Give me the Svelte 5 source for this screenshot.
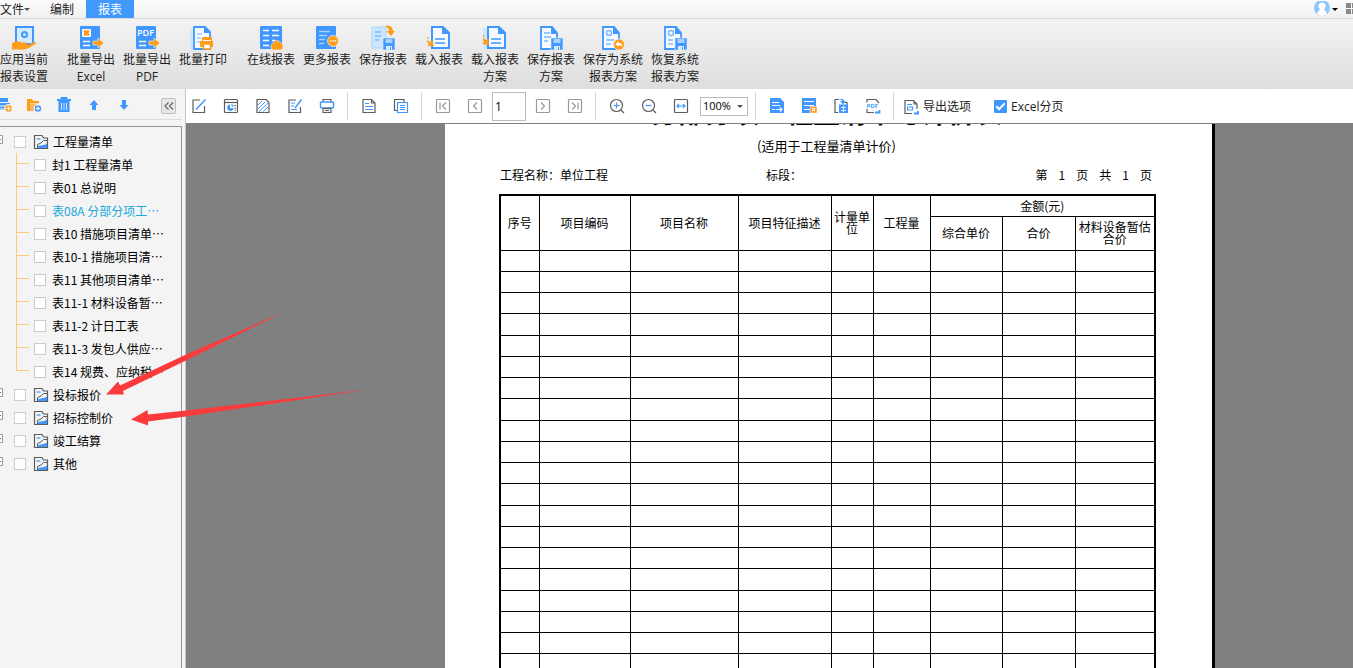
<script lang="ts">
  type Tool = { icon: string; label: string }
  type RibbonItem = { icon: string; lines: string[]; wide?: boolean }

  const blue = '#3f97ff'
  const orange = '#ff9c1a'
  const disk = `<path d="M12 12h12v12H12z" fill="${blue}" stroke="#eee" stroke-width=".6"/><path d="M14.500 13h7v4h-7z" fill="#a8d4ff"/><path d="M15 20h6v4h-6z" fill="#d8ecff"/><path d="M19 21h1v3h-1z" fill="${blue}"/>`
  const sheet = `<path d="M2 1h11l5 6v16H2z" fill="#f4faff" stroke="${blue}" stroke-width="1.800"/><path d="M12 0v8h7z" fill="${blue}"/>`
  const arrowOut = `<path d="M14 15h5v-3l6 5-6 5v-3h-5z" fill="${orange}" stroke="#eee" stroke-width=".6"/>`
  const boxed = (d: string) => `<rect x="1.500" y="1.500" width="13" height="13" rx="1"/><path d="${d}"/>`

  // 24 x 24 drawings for the ribbon
  const big: Record<string, string> = {
    apply: `<path d="M4 1h17v17H4z" fill="#d5eaff" stroke="${blue}" stroke-width="2"/><circle cx="12.500" cy="8.500" r="2.500" fill="none" stroke="${blue}" stroke-width="2"/><path d="M0 17l5-2 5 1.500h4c1.500 0 1.500 2 0 2.500l2 0 5-2.500c2-.6 4 0 3 1l-7 4.500-5 1.500H0z" fill="${orange}"/>`,
    excel: `<rect x="1" width="20" height="23" rx="1" fill="${blue}"/><rect x="3" y="3" width="9" height="8" rx="1" fill="#fff"/><path d="M5 4.500l5 5m0-5l-5 5" stroke="${orange}" stroke-width="2.600"/><path d="M4 15.500h7M4 19.500h7" stroke="#fff" stroke-width="1.500"/>${arrowOut}`,
    pdf: `<rect x="1" width="20" height="23" rx="1" fill="${blue}"/><text x="2" y="10" font-family="Open Sans, sans-serif" font-weight="600" font-size="9" fill="#fff">PDF</text><path d="M4 15.500h7M4 19.500h7" stroke="#fff" stroke-width="1.500"/>${arrowOut}`,
    print: `<path d="M-1 3h4v20h-4z" fill="#cde6ff"/><path d="M3 1h11l5 5v17H3z" fill="#f4faff" stroke="${blue}" stroke-width="1.800"/><path d="M13 0v7h7z" fill="${blue}"/><path d="M6 8h5M6 12h4M6 16h3" stroke="#9ccbff" stroke-width="1.500"/><path d="M11 11h10v4h1v6H9v-6h2z" fill="${orange}"/><path d="M12.500 18h7v5h-7z" fill="#fff" stroke="${orange}" stroke-width="1.500"/><path d="M12 14.500h8" stroke="#fff"/>`,
    online: `<rect x="1" width="22" height="23" rx="1" fill="${blue}"/><path d="M4 4.500h6M13 4.500h7M4 9.500h6M13 9.500h7M4 14.500h6M4 19.500h6M13 14.500h3" stroke="#fff" stroke-width="1.600"/><path d="M14 24a4 4 0 0 1 0-7 4.500 4.500 0 0 1 8 0 4 4 0 0 1 0 7z" fill="${orange}" stroke="#eee" stroke-width=".6"/>`,
    more: `<rect x="1" width="20" height="23" rx="1" fill="${blue}"/><path d="M4 5.500h11M4 9.500h8M4 13.500h6M4 17.500h5" stroke="#a8d4ff" stroke-width="1.500"/><circle cx="18" cy="15" r="5.500" fill="${orange}" stroke="#eee" stroke-width=".8"/><path d="M14.800 15h1.400M17.300 15h1.400M19.800 15h1.400" stroke="#fff" stroke-width="1.500"/>`,
    save: `<path d="M1 1h14v21H1z" fill="#cde6ff" stroke="#a8d4ff"/><path d="M4 6h6M4 10h6M4 14h4" stroke="#7cb9ff" stroke-width="1.500"/><path d="M14 0c6-1 8 2 8 5h2l-4 5-4.500-5H18c0-2-1-3-4-5z" fill="${orange}"/>${disk}`,
    load: `<path d="M5 1h11l6 6v15H5z" fill="#f4faff" stroke="${blue}" stroke-width="2"/><path d="M15 0v8h8z" fill="${blue}"/><path d="M8 13h10M8 17h10" stroke="${blue}" stroke-width="1.600"/><path d="M0 11c0 3 1 4 3 5l2-2 2 6-7 0 2-2c-2-2-3-4 0-7z" fill="${orange}"/>`,
    loadPlan: `<path d="M0 2h4v21H0z" fill="#cde6ff"/><path d="M5 1h11l6 6v15H5z" fill="#f4faff" stroke="${blue}" stroke-width="2"/><path d="M15 0v8h8z" fill="${blue}"/><path d="M8 13h10M8 17h10" stroke="${blue}" stroke-width="1.600"/><path d="M0 9c0 3 1 4 3 5l2-2 1 7-7-1 2-2c-2-2-1-4 1-7z" fill="${orange}"/>`,
    savePlan: `${sheet}<path d="M5 7h6M5 11h7M5 15h4" stroke="#7cb9ff" stroke-width="1.500"/>${disk}`,
    saveSystem: `${sheet}<circle cx="8" cy="7" r="2.500" fill="none" stroke="#7cb9ff" stroke-width="1.500"/><path d="M5 14h8M5 18h5" stroke="#7cb9ff" stroke-width="1.500"/><circle cx="18" cy="18.500" r="5.500" fill="${orange}" stroke="#eee" stroke-width=".8"/><path d="M14.500 18l3-3v2c3 0 4 1 4 4-1-1-2-2-4-1.500V21z" fill="#fff"/>`,
    restore: `${sheet}<circle cx="8" cy="7" r="2.500" fill="none" stroke="#7cb9ff" stroke-width="1.500"/><path d="M5 14h5M5 18h5" stroke="#7cb9ff" stroke-width="1.500"/>${disk}`,
  }

  // 16 x 16 drawings, grey stroke unless a shape says otherwise
  const small: Record<string, string> = {
    printAdd: `<path d="M2 1h10v4H2zM0 6h14v7H0z" fill="${blue}" stroke="none"/><path d="M3 9h8M4 12h6" stroke="#fff"/><circle cx="12.500" cy="11.500" r="3.800" fill="${orange}" stroke="#f4f4f4"/><path d="M10.500 11.500h4M12.500 9.500v4" stroke="#fff"/>`,
    folderAdd: `<path d="M1 2h5l1 2h6v2H4v8H1z" fill="${orange}" stroke="none"/><path d="M4 6.500h9V14H4z" fill="#ffb75a" stroke="none"/><circle cx="12" cy="11.500" r="3.800" fill="${blue}" stroke="#f4f4f4"/><path d="M10 11.500h4M12 9.500v4" stroke="#fff"/>`,
    trash: `<path d="M1 3h14M5.500 3V1h5v2" stroke="${blue}" stroke-width="2"/><path d="M2.500 4h11v11h-11z" fill="${blue}" stroke="none"/><path d="M5.500 6v7M8 6v7M10.500 6v7" stroke="#fff" stroke-width=".8"/>`,
    up: `<path d="M8 3l4.500 5H10v5H6V8H3.500z" fill="${blue}" stroke="none"/>`,
    down: `<path d="M8 13l4.500-5H10V3H6v5H3.500z" fill="${blue}" stroke="none"/>`,
    edit: `<path d="M9 2H2v12.500h11.500V8"/><path d="M5 11.500L14.500 1.500" stroke="${blue}" stroke-width="1.500"/>`,
    design: `<rect x="1.500" y="1.500" width="13" height="13" rx="1"/><path d="M1.500 4.500h13"/><path d="M7 6.500a3.200 3.200 0 1 0 3.500 3.500H7z" fill="${blue}" stroke="none"/><path d="M8.500 6a3.500 3.500 0 0 1 2.500 2.500H8.500z" fill="${blue}" stroke="none"/><path d="M11.500 7.500H13M11.500 10H13M11.500 12H13"/>`,
    hatch: `<path d="M2 1.500h9l3 3v10H2z"/><path d="M3 7l4-4M3 11l7-7M4 13.500L13 5M8 13.500L13 9" stroke="${blue}" stroke-width="1"/>`,
    note: `<path d="M9 2H2v12.500h11.500V9"/><path d="M4 5h4M4 8h3M4 11.500h6" stroke="${blue}"/><path d="M8 10l6.500-8.500" stroke="${blue}" stroke-width="1.500"/>`,
    printer: `<path d="M4 5V1.500h8V5M4 11v3.500h8V11M6 12.500h4"/><rect x="1.500" y="4" width="13" height="6" rx="1" fill="#fff" stroke="${blue}" stroke-width="1.500"/><path d="M4 10.500h8"/>`,
    page: `<path d="M2 1.500h8.500l3.500 3.500v9.500H2zM10.500 1.500V5H14"/><path d="M4 5.500h4M4 8.500h8M4 11.500h8" stroke="${blue}"/>`,
    pages: `<path d="M4 12.500H1.500v-11H11V4"/><path d="M4.500 4.500h10v10h-10zM7 7.500h5M7 9.500h5M7 11.500h5" stroke="${blue}"/>`,
    first: boxed('M5 4.500v7M11 4.500L7.500 8l3.500 3.500'),
    prev: boxed('M10 4.500L6.500 8l3.500 3.500'),
    next: boxed('M6 4.500L9.500 8 6 11.500'),
    last: boxed('M11 4.500v7M5 4.500L8.500 8 5 11.500'),
    zoomIn: `<circle cx="7.500" cy="7.500" r="6"/><path d="M12 12l3 3"/><path d="M4.500 7.500h6M7.500 4.500v6" stroke="${blue}"/>`,
    zoomOut: `<circle cx="7.500" cy="7.500" r="6"/><path d="M12 12l3 3"/><path d="M4.500 7.500h6" stroke="${blue}"/>`,
    fit: `<rect x="1.500" y="1.500" width="13" height="13" rx="1"/><path d="M4 8h8M6 6L4 8l2 2M10 6l2 2-2 2" stroke="${blue}"/>`,
    exportPage: `<path d="M1 0h10l4 4v11H1z" fill="${blue}" stroke="none"/><path d="M3 4.500h7M3 7.500h8M3 11.500h3M7 11.500h6M11 9.500l2 2-2 2" stroke="#fff"/>`,
    exportExcel: `<path d="M1 0h14v11H1zM1 11h8v4H1z" fill="${blue}" stroke="none"/><path d="M3 3.500h10M3 7.500h10M3 11.500h6" stroke="#fff"/><path d="M9 8.500h7V15H9z" fill="${orange}" stroke="#fff" stroke-width=".5"/><path d="M11 10.200l3 3m0-3l-3 3" stroke="#fff"/>`,
    exportSheet: `<path d="M6 1.500H2v13h3M12 4.500h2V7"/><path d="M6 6.500h9V15H6zM6 1c3-.5 5 0 5 2h2l-3 3.500L7 3h2c0-1-1-1.500-3-2z" fill="${blue}" stroke="none"/><path d="M8 9.500h5M8 12.500h5M10.500 8v6" stroke="#fff" stroke-width=".8"/>`,
    exportPdf: `<path d="M2 4.500v-3h9L14 5M2 11v3.500h7"/><text x="1.500" y="10" font-family="Open Sans, sans-serif" font-weight="700" font-size="6" fill="${blue}" stroke="none">PDF</text><path d="M10 14.500h4.500V12" stroke="${blue}" stroke-width="1.800"/>`,
    options: `<path d="M9 14.500H2v-13h8.500L14 5v5M11 1.500V5h3"/><path d="M4 5.500h5M4.500 8h5v3h-5z" stroke="${blue}"/><path d="M11 14.500h4V12" stroke="${blue}" stroke-width="1.800"/>`,
    report: `<path d="M1.500 14.500v-13H9L10.500 4h4v10.500z"/><path d="M3.500 5h4" stroke="${blue}"/><path d="M4.500 14v-3.500L8 9l2.500-2.500h4" stroke-width="1"/><path d="M5 14c0-4 4-1.500 9-4.500V14z" fill="${blue}" stroke="none"/>`,
  }

  const ribbon: RibbonItem[][] = [
    [{ icon: 'apply', lines: ['应用当前', '报表设置'] }],
    [
      { icon: 'excel', lines: ['批量导出', 'Excel'] },
      { icon: 'pdf', lines: ['批量导出', 'PDF'] },
      { icon: 'print', lines: ['批量打印'] },
    ],
    [
      { icon: 'online', lines: ['在线报表'] },
      { icon: 'more', lines: ['更多报表'] },
      { icon: 'save', lines: ['保存报表'] },
      { icon: 'load', lines: ['载入报表'] },
      { icon: 'loadPlan', lines: ['载入报表', '方案'] },
      { icon: 'savePlan', lines: ['保存报表', '方案'] },
      { icon: 'saveSystem', lines: ['保存为系统', '报表方案'], wide: true },
      { icon: 'restore', lines: ['恢复系统', '报表方案'] },
    ],
  ]

  const treeTools: Tool[] = [
    { icon: 'printAdd', label: '新建报表' },
    { icon: 'folderAdd', label: '新建文件夹' },
    { icon: 'trash', label: '删除' },
    { icon: 'up', label: '上移' },
    { icon: 'down', label: '下移' },
  ]
  const editTools: Tool[] = [
    { icon: 'edit', label: '编辑' },
    { icon: 'design', label: '设计' },
    { icon: 'hatch', label: '背景' },
    { icon: 'note', label: '批注' },
    { icon: 'printer', label: '打印' },
  ]
  const pageTools: Tool[] = [
    { icon: 'page', label: '单页' },
    { icon: 'pages', label: '多页' },
  ]
  const backTools: Tool[] = [
    { icon: 'first', label: '首页' },
    { icon: 'prev', label: '上一页' },
  ]
  const forwardTools: Tool[] = [
    { icon: 'next', label: '下一页' },
    { icon: 'last', label: '末页' },
  ]
  const zoomTools: Tool[] = [
    { icon: 'zoomIn', label: '放大' },
    { icon: 'zoomOut', label: '缩小' },
    { icon: 'fit', label: '适合宽度' },
  ]
  const exportTools: Tool[] = [
    { icon: 'exportPage', label: '导出' },
    { icon: 'exportExcel', label: '导出 Excel' },
    { icon: 'exportSheet', label: '导出表格' },
    { icon: 'exportPdf', label: '导出 PDF' },
  ]

  const tree = [
    {
      name: '工程量清单',
      children: [
        '封1 工程量清单',
        '表01 总说明',
        '表08A 分部分项工…',
        '表10 措施项目清单…',
        '表10-1 措施项目清…',
        '表11 其他项目清单…',
        '表11-1 材料设备暂…',
        '表11-2 计日工表',
        '表11-3 发包人供应…',
        '表14 规费、应纳税…',
      ],
    },
    { name: '投标报价', children: [] },
    { name: '招标控制价', children: [] },
    { name: '竣工结算', children: [] },
    { name: '其他', children: [] },
  ]

  let selected = $state('表08A 分部分项工…')
  let pageNo = $state('1')
  let zoom = $state('100%')
  let splitPages = $state(true)

  const columns = [39, 91, 108, 93, 42, 57, 72, 73, 80]
  const blankRows = Array.from({ length: 24 })
</script>

{#snippet toolButtons(tools: Tool[], faded = false)}
  {#each tools as tool}
    <button class="tool" class:faded aria-label={tool.label}>
      <svg viewBox="0 0 16 16" aria-hidden="true">{@html small[tool.icon]}</svg>
    </button>
  {/each}
{/snippet}

<div class="window">
  <header class="tabs">
    <button class="tab file">文件<span class="caret"></span></button>
    <button class="tab">编制</button>
    <button class="tab active">报表</button>
    <div class="account">
      <button class="user" aria-label="账户">
        <svg viewBox="0 0 16 16" aria-hidden="true">
          <circle cx="8" cy="7" r="8" fill="#8fc7fb" />
          <circle cx="8" cy="5" r="3.500" fill="#fff" />
          <path d="M3 13c1-4 3-3 3-5h4c0 2 2 1 3 5a8 8 0 0 1-10 0z" fill="#fff" />
        </svg>
        <span class="caret dark"></span>
      </button>
      <button class="apps" aria-label="应用">
        <svg viewBox="0 0 12 12" aria-hidden="true">
          <path d="M0 0h5v5H0zM6 0h5v5H6zM0 6h5v5H0zM6 6h5v5H6z" fill="#888" />
        </svg>
      </button>
    </div>
  </header>

  <nav class="ribbon">
    {#each ribbon as group}
      <div class="group">
        {#each group as item}
          <button class="command" class:wide={item.wide}>
            <svg viewBox="0 0 24 24" aria-hidden="true">{@html big[item.icon]}</svg>
            {#each item.lines as line}<span>{line}</span>{/each}
          </button>
        {/each}
      </div>
    {/each}
  </nav>

  <div class="body">
    <aside class="side">
      <div class="side-tools">
        {@render toolButtons(treeTools)}
        <button class="collapse" aria-label="收起">
          <svg viewBox="0 0 16 16" aria-hidden="true">
            <path d="M7.500 4.500L4 8l3.500 3.500M12 4.500L8.500 8l3.500 3.500" fill="none" stroke="#666" stroke-width="1.200" />
          </svg>
        </button>
      </div>
      <div class="tree">
        {#each tree as folder}
          <div class="row">
            <button class="expander" aria-label="展开">
              <svg viewBox="0 0 9 9" aria-hidden="true">
                <path d="M.5 .5h8v8h-8z" fill="#fff" stroke="#999" />
                <path d={folder.children.length ? 'M2 4.500h5' : 'M2 4.500h5M4.500 2v5'} stroke="#2b7fd0" />
              </svg>
            </button>
            <label>
              <input type="checkbox" />
              <svg class="report" viewBox="0 0 16 16" aria-hidden="true">{@html small.report}</svg>
              <span>{folder.name}</span>
            </label>
          </div>
          {#if folder.children.length}
            <ul>
              {#each folder.children as name}
                <li class:selected={selected === name}>
                  <label><input type="checkbox" /><span>{name}</span></label>
                </li>
              {/each}
            </ul>
          {/if}
        {/each}
      </div>
    </aside>

    <main class="content">
      <div class="toolbar">
        {@render toolButtons(editTools)}
        <span class="sep"></span>
        {@render toolButtons(pageTools)}
        <span class="sep"></span>
        {@render toolButtons(backTools, true)}
        <input class="page-no" aria-label="页码" bind:value={pageNo} />
        {@render toolButtons(forwardTools, true)}
        <span class="sep"></span>
        {@render toolButtons(zoomTools)}
        <div class="zoom">
          <select aria-label="缩放" bind:value={zoom}>
            <option>100%</option>
            <option>75%</option>
            <option>50%</option>
          </select>
          <span class="caret"></span>
        </div>
        <span class="sep"></span>
        {@render toolButtons(exportTools)}
        <span class="sep"></span>
        <button class="options">
          <svg viewBox="0 0 16 16" aria-hidden="true">{@html small.options}</svg>
          <span>导出选项</span>
        </button>
        <label class="split">
          <input type="checkbox" bind:checked={splitPages} />
          <span>Excel分页</span>
        </label>
      </div>

      <div class="viewer">
        <article class="paper">
          <h1>分部分项工程量清单与计价表</h1>
          <p class="subtitle">(适用于工程量清单计价)</p>
          <div class="info">
            <span>工程名称：单位工程</span>
            <span>标段：</span>
            <span class="pager">
              <span>第</span><span>1</span><span>页</span><span>共</span><span>1</span><span>页</span>
            </span>
          </div>
          <table>
            <colgroup>
              {#each columns as width}<col style="width: {width}px" />{/each}
            </colgroup>
            <thead>
              <tr class="head-top">
                <th rowspan="2">序号</th>
                <th rowspan="2">项目编码</th>
                <th rowspan="2">项目名称</th>
                <th rowspan="2">项目特征描述</th>
                <th rowspan="2">计量单位</th>
                <th rowspan="2">工程量</th>
                <th colspan="3">金额(元)</th>
              </tr>
              <tr class="head-sub">
                <th>综合单价</th>
                <th>合价</th>
                <th>材料设备暂估合价</th>
              </tr>
            </thead>
            <tbody>
              {#each blankRows as _}
                <tr>{#each columns as _}<td></td>{/each}</tr>
              {/each}
            </tbody>
          </table>
        </article>
      </div>
    </main>
  </div>

  <!-- Callouts pointing at the two price folders -->
  <svg class="callouts" viewBox="0 0 370 440" aria-hidden="true">
    <path d="M106 394.500L118 381.500 120 385.500 185 355 284 312 185 361 123 391 124 394.500z" />
    <path d="M131 419.500L147.500 410 148 414.500 186 410.500 368 389.500 186 416.500 148 421.500 148 425.500z" />
  </svg>
</div>

<style>
  :global(body) {
    overflow: hidden;
  }

  .window {
    position: relative;
    display: flex;
    flex-direction: column;
    height: 100vh;
    overflow: hidden;
    background: #f4f4f4;
    color: #222;
    font: 12px/16px "Open Sans", "Noto Sans CJK SC", sans-serif;
  }

  button {
    flex-shrink: 0;
    padding: 0;
    border: 0;
    background: none;
    color: inherit;
    font: inherit;
    cursor: pointer;
  }

  svg {
    display: block;
    flex-shrink: 0;
  }

  .caret {
    display: inline-block;
    border: 3px solid transparent;
    border-top-color: #555;
    border-bottom: 0;
  }

  .caret.dark {
    border-top-color: #000;
  }

  /* Tabs */
  .tabs {
    display: flex;
    flex-shrink: 0;
    height: 18px;
    border-bottom: 1px solid #d8d8d8;
    background: linear-gradient(#fbfbfb, #f1f1f1);
  }

  .tab {
    width: 48px;
    line-height: 19px;
  }

  .tab.file {
    display: flex;
    align-items: center;
    width: 38px;
  }

  .tab.active {
    background: #4099ff;
    color: #fff;
  }

  .account {
    display: flex;
    gap: 8px;
    margin: 0 -5px 0 auto;
  }

  .user {
    display: flex;
    align-items: center;
    gap: 2px;
  }

  .user svg {
    width: 16px;
    height: 16px;
  }

  .apps svg {
    width: 12px;
    height: 12px;
  }

  /* Ribbon */
  .ribbon {
    display: flex;
    flex-shrink: 0;
    gap: 12px;
    height: 70px;
    background: linear-gradient(#f3f3f3, #dedede);
  }

  .group {
    display: flex;
  }

  .group:first-child {
    margin-right: 3px;
  }

  .command {
    display: flex;
    flex-direction: column;
    align-items: center;
    width: 56px;
    padding-top: 7px;
    line-height: 17px;
    white-space: nowrap;
  }

  .group:first-child .command {
    width: 48px;
  }

  .command.wide {
    width: 68px;
  }

  .command svg {
    width: 24px;
    height: 24px;
    margin-bottom: 1px;
    overflow: visible;
  }

  .body {
    display: flex;
    flex: 1;
    min-height: 0;
  }

  /* Report tree */
  .side {
    display: flex;
    flex-direction: column;
    flex-shrink: 0;
    width: 185px;
    border-right: 1px solid #c8c8c8;
  }

  .side-tools {
    display: flex;
    align-items: center;
    gap: 6px;
    box-sizing: border-box;
    height: 31px;
    margin: 0 3px 6px 0;
    padding: 1px 6px 0 0;
    border-bottom: 1px solid #dcdcdc;
  }

  .tool {
    display: grid;
    place-items: center;
    width: 24px;
    height: 24px;
  }

  .side-tools .tool:first-child {
    margin-left: -8px;
  }

  .tool svg,
  .options svg,
  .report {
    width: 16px;
    height: 16px;
    fill: none;
    stroke: #5c5c5c;
    stroke-width: 1.2;
  }

  .tool.faded svg {
    stroke: #999;
  }

  .collapse {
    display: grid;
    place-content: center;
    box-sizing: border-box;
    width: 15px;
    height: 16px;
    margin: 3px 0 0 auto;
    border: 1px solid #c0c0c0;
    border-radius: 2px;
    background: #e6e6e6;
  }

  .collapse svg {
    width: 16px;
    height: 16px;
  }

  .tree {
    flex: 1;
    margin-right: 3px;
    padding-top: 3px;
    border-top: 1px solid #8e979c;
    border-right: 1px solid #8e979c;
    overflow: hidden;
    color: #000;
    font-family: "Noto Sans CJK SC", sans-serif;
  }

  .row,
  .row label,
  li label {
    display: flex;
    align-items: center;
    height: 23px;
    white-space: nowrap;
  }

  .report {
    margin: 0 4px 0 7px;
  }

  .expander {
    margin: 0 11px 4px -6px;
  }

  .expander svg {
    width: 9px;
    height: 9px;
  }

  .tree input {
    box-sizing: border-box;
    width: 12px;
    height: 12px;
    margin: 0;
    border: 1px solid #ccc;
    background: #fff;
    appearance: none;
  }

  ul {
    margin: 0 0 0 16px;
    padding: 0;
    list-style: none;
  }

  li {
    display: flex;
    background: linear-gradient(#ffc878, #ffc878) no-repeat 0 0 / 1px 100%;
  }

  li::before {
    width: 13px;
    height: 10px;
    margin-right: 5px;
    border-bottom: 1px solid #ffc878;
    content: "";
  }

  li:last-child {
    background-size: 1px 11px;
  }

  li label {
    gap: 6px;
  }

  li.selected {
    color: #18a9dc;
  }

  /* Preview toolbar */
  .content {
    display: flex;
    flex: 1;
    flex-direction: column;
    min-width: 0;
  }

  .toolbar {
    box-sizing: border-box;
    display: flex;
    flex-shrink: 0;
    align-items: center;
    gap: 8px;
    height: 35px;
    padding-left: 1px;
    border-bottom: 1px solid #808080;
    background: #fff;
    white-space: nowrap;
  }

  .sep {
    width: 1px;
    height: 28px;
    margin-right: 1px;
    background: #d8d8d8;
  }

  .page-no {
    box-sizing: border-box;
    width: 34px;
    height: 29px;
    margin: 0 -3px;
    padding: 0 2px;
    border: 1px solid #bbb;
    font: inherit;
  }

  .zoom {
    position: relative;
    margin: 0 -1px;
  }

  .zoom select {
    display: block;
    box-sizing: border-box;
    width: 48px;
    height: 19px;
    padding: 0 2px;
    border: 1px solid #bbb;
    border-radius: 0;
    background: #fff;
    color: #000;
    font: inherit;
    font-size: 11px;
    appearance: none;
  }

  .zoom .caret {
    position: absolute;
    top: 8px;
    right: 5px;
    pointer-events: none;
  }

  .options,
  .split {
    display: flex;
    align-items: center;
    gap: 4px;
    padding-top: 1px;
  }

  .split {
    margin-left: 15px;
  }

  .split input {
    display: grid;
    place-items: center;
    width: 13px;
    height: 13px;
    margin: 0;
    border: 0;
    border-radius: 1px;
    background: #ccc;
    appearance: none;
  }

  .split input:checked {
    background: #3f97ff;
  }

  .split input:checked::after {
    width: 7px;
    height: 3px;
    margin-bottom: 3px;
    border: solid #fff;
    border-width: 0 0 2px 2px;
    transform: rotate(-45deg);
    content: "";
  }

  /* Page preview */
  .viewer {
    display: grid;
    flex: 1;
    grid-template-columns: minmax(0, 259fr) 770px minmax(0, 138fr);
    min-height: 0;
    overflow: hidden;
    background: #808080;
  }

  .paper {
    grid-column: 2;
    box-sizing: border-box;
    padding: 0 58px 0 54px;
    border-right: 3px solid #000;
    background: #fff;
    color: #000;
    font-family: "Noto Sans CJK SC", sans-serif;
  }

  h1 {
    margin: -27px 0 0;
    font-size: 27px;
    line-height: 30px;
    text-align: center;
    white-space: nowrap;
  }

  .subtitle {
    margin: 11px 0 13px;
    font-size: 13px;
    line-height: 16px;
    text-align: center;
  }

  .info {
    display: grid;
    grid-template-columns: 266px 1fr auto;
    margin-bottom: 11px;
    padding: 0 2px 0 1px;
  }

  .pager {
    display: flex;
    gap: 11px;
  }

  table {
    width: 100%;
    height: 567px;
    border: 2px solid #000;
    border-collapse: collapse;
    table-layout: fixed;
  }

  th,
  td {
    padding: 0;
    border: 1px solid #000;
    font-weight: 400;
    line-height: 12px;
  }

  tbody tr {
    height: 21px;
  }

  .head-top {
    height: 21px;
  }

  .head-sub {
    height: 34px;
  }

  .callouts {
    position: absolute;
    top: 0;
    left: 0;
    width: 370px;
    height: 440px;
    fill: #fb3b3b;
    pointer-events: none;
  }
</style>
